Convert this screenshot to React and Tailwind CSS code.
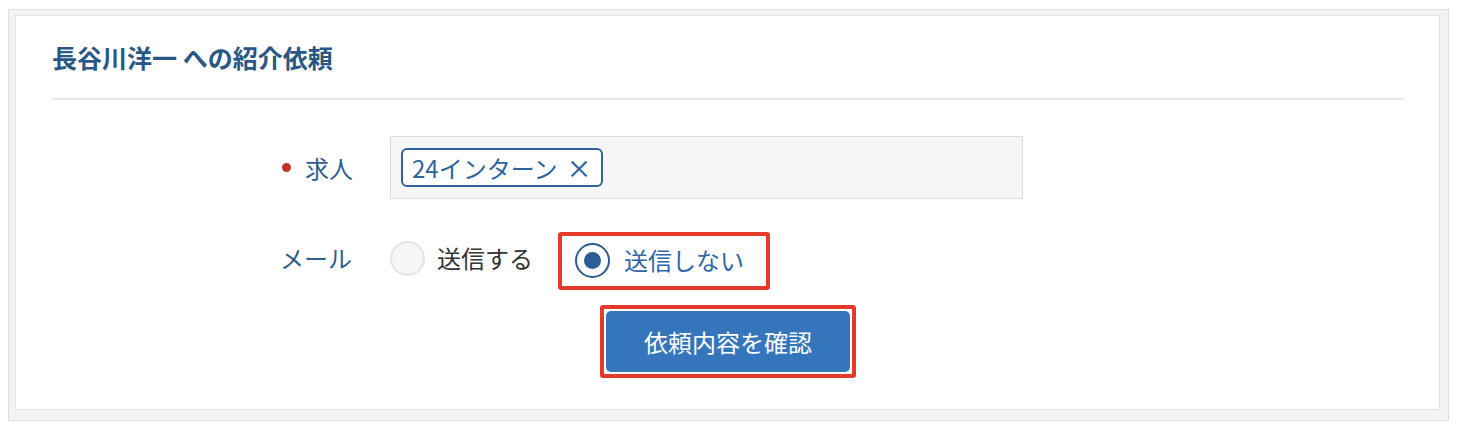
import { useState } from 'react';

const font = { fontFamily: '"Noto Sans CJK JP", "Noto Sans", sans-serif' };

function Radio({ checked }) {
  return (
    <span
      className={`flex items-center justify-center w-[35px] h-[35px] rounded-full shrink-0 ${
        checked ? 'border-2 border-[#2d5b8e] bg-white' : 'border-2 border-[#e4e4e4] bg-[#f6f6f6]'
      }`}
    >
      {checked && <span className="w-[17px] h-[17px] rounded-full bg-[#2b5d97]" />}
    </span>
  );
}

export default function App() {
  const [mail, setMail] = useState('no');

  return (
    <div className="pt-[9px] pl-[8px] bg-white w-[1460px] h-[434px]" style={font}>
      {/* outer frame */}
      <div className="w-[1441px] h-[412px] border border-[#dedede] bg-[#f3f3f3] pt-[5px] pl-[6px] pr-[8px] pb-[10px]">
        {/* panel */}
        <div className="h-full border border-[#e3e3e3] bg-white pl-[36px] pr-[35px]">
          <div className="pt-[25px] pb-[24px] border-b-2 border-[#e8e8e8]">
            <h2 className="text-[25px] leading-[33px] font-bold text-[#2a5783]">長谷川洋一 への紹介依頼</h2>
          </div>

          {/* 求人 */}
          <div className="flex items-center mt-[36px]">
            <div className="w-[303px] flex justify-end items-center pr-[2px]">
              <span className="w-[9px] h-[9px] rounded-full bg-[#c3302a] mr-[14px]" />
              <span className="text-[24px] leading-none text-[#2f5e8e]">求人</span>
            </div>
            <div className="ml-[35px] w-[633px] h-[63px] border border-[#dcdcdc] bg-[#f6f6f6] flex items-center pl-[10px]">
              <span className="flex items-center h-[39px] pl-[9px] pr-[10px] border-2 border-[#2e65a0] rounded-[6px] bg-white text-[24px] leading-none text-[#2e65a0]">
                24インターン
                <span className="ml-[9px] text-[25px] font-medium">×</span>
              </span>
            </div>
          </div>

          {/* メール */}
          <div className="flex items-center mt-[33px] h-[58px]">
            <div className="w-[303px] flex justify-end items-center pr-[3px] pb-[6px]">
              <span className="text-[24px] leading-none text-[#2f5e8e]">メール</span>
            </div>
            <button
              type="button"
              onClick={() => setMail('yes')}
              className="ml-[35px] flex items-center pb-[6px]"
            >
              <Radio checked={mail === 'yes'} />
              <span className="ml-[12px] text-[24px] leading-none text-[#333]">送信する</span>
            </button>
            <button
              type="button"
              onClick={() => setMail('no')}
              className="ml-[25px] h-[58px] flex items-center border-[4px] border-[#e5392b] rounded-[3px] pl-[13px] pr-[22px] pb-[2px]"
            >
              <Radio checked={mail === 'no'} />
              <span className="ml-[14px] text-[24px] leading-none text-[#2f66a4]">送信しない</span>
            </button>
          </div>

          {/* submit */}
          <div className="flex justify-center mt-[15px]">
            <div className="border-[4px] border-[#e5392b] rounded-[3px] p-[2px]">
              <button
                type="button"
                className="w-[244px] h-[61px] rounded-[5px] bg-[#3575bb] text-white text-[24px] leading-none"
              >
                依頼内容を確認
              </button>
            </div>
          </div>
        </div>
      </div>
    </div>
  );
}
